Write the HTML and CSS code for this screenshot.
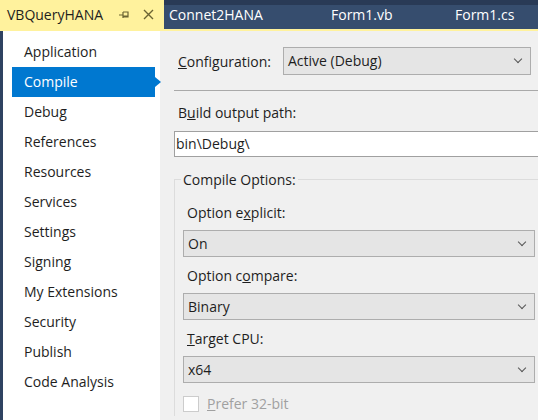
FILE: index.html
```html
<!DOCTYPE html>
<html>
<head>
  <title>VBQueryHANA</title>
  <link rel="stylesheet" href="styles.css">
</head>
<body>
  <div id="window">
    <div id="tabs">
      <div class="tab active">
        <span class="tab-name">VBQueryHANA</span>
        <svg class="pin" width="12" height="12" viewBox="0 0 12 12">
          <path d="M1 6h4M5 3v6M5 3h5v5H5M5 7h5" stroke="#6b6433" stroke-width="1.2" fill="none"/>
        </svg>
        <svg class="close" width="11" height="11" viewBox="0 0 11 11">
          <path d="M1 1l9 9M10 1l-9 9" stroke="#6b6433" stroke-width="1.4"/>
        </svg>
      </div>
      <div class="tab tab-two">Connet2HANA</div>
      <div class="tab tab-three">Form1.vb</div>
      <div class="tab">Form1.cs</div>
    </div>

    <div id="page">
      <div id="nav">
        <div class="nav-item">Application</div>
        <div class="nav-item selected">Compile</div>
        <div class="nav-item">Debug</div>
        <div class="nav-item">References</div>
        <div class="nav-item">Resources</div>
        <div class="nav-item">Services</div>
        <div class="nav-item">Settings</div>
        <div class="nav-item">Signing</div>
        <div class="nav-item">My Extensions</div>
        <div class="nav-item">Security</div>
        <div class="nav-item">Publish</div>
        <div class="nav-item">Code Analysis</div>
      </div>

      <div id="content">
        <div class="config-row">
          <label><u>C</u>onfiguration:</label>
          <div class="combo config-combo">Active (Debug)<span class="chevron"></span></div>
        </div>
        <div class="separator"></div>

        <div class="label build-label">B<u>u</u>ild output path:</div>
        <div class="textbox">bin\Debug\</div>

        <div class="group">
          <div class="group-title">Compile Options:</div>
          <div class="label first">Option e<u>x</u>plicit:</div>
          <div class="combo">On<span class="chevron"></span></div>
          <div class="label">Option c<u>o</u>mpare:</div>
          <div class="combo">Binary<span class="chevron"></span></div>
          <div class="label"><u>T</u>arget CPU:</div>
          <div class="combo">x64<span class="chevron"></span></div>
          <div class="check-row">
            <span class="checkbox"></span>
            <span class="check-label"><u>P</u>refer 32-bit</span>
          </div>
        </div>
      </div>
    </div>
  </div>
</body>
</html>
```

FILE: styles.css
```css
html, body {
  margin: 0;
  padding: 0;
  width: 538px;
  height: 420px;
  overflow: hidden;
}

body {
  font-family: "Open Sans", "Noto Sans", sans-serif;
  font-size: 14px;
  color: #1e1e1e;
  background: #f0f0f0;
}

#window {
  display: flex;
  flex-direction: column;
  height: 420px;
  overflow: hidden;
}

/* tab strip */
#tabs {
  display: flex;
  height: 29px;
  background: linear-gradient(#293a56 0, #293a56 5px, #364d6e 5px);
  border-bottom: 2px solid #fff29d;
  flex-shrink: 0;
}

.tab {
  display: flex;
  align-items: center;
  padding-left: 5px;
  color: #ffffff;
  font-size: 14px;
}

.tab.active {
  width: 157px;
  padding-left: 7px;
  background: #fff29d;
  color: #1e1e1e;
}

.tab-name {
  flex: 1;
}

.pin {
  margin-right: 13px;
  margin-top: 1px;
}

.close {
  margin-right: 10px;
}

.tab-two {
  width: 157px;
}

.tab-three {
  width: 119px;
}

/* page body */
#page {
  display: flex;
  flex: 1;
  min-height: 0;
  border-left: 3px solid #2f4261;
}

#nav {
  width: 157px;
  background: #ffffff;
  padding-top: 6px;
}

.nav-item {
  height: 30px;
  line-height: 29px;
  padding-left: 12px;
  margin-left: 9px;
  width: 131px;
  position: relative;
}

.nav-item.selected {
  background: #0078d0;
  color: #ffffff;
}

.nav-item.selected::after {
  content: "";
  position: absolute;
  right: -6px;
  top: 10px;
  border-left: 6px solid #0078d0;
  border-top: 5px solid transparent;
  border-bottom: 5px solid transparent;
}

#content {
  flex: 1;
  padding-top: 16px;
  padding-left: 14px;
}

.config-row {
  display: flex;
  align-items: center;
  padding-left: 4px;
}

.config-row label {
  width: 105px;
}

.combo {
  height: 26px;
  line-height: 25px;
  background: #e5e5e5;
  border: 1px solid #adadad;
  padding-left: 4px;
  position: relative;
}

.config-combo {
  width: 242px;
}

.chevron {
  position: absolute;
  right: 9px;
  top: 8px;
  width: 5px;
  height: 5px;
  border-right: 1px solid #555;
  border-bottom: 1px solid #555;
  transform: rotate(45deg);
}

.separator {
  height: 1px;
  background: #a9a9a9;
  margin: 15px 0 0 0;
}

.label {
  padding-left: 4px;
  height: 22px;
  line-height: 22px;
}

.build-label {
  margin-top: 11px;
}

.textbox {
  margin-top: 7px;
  height: 24px;
  line-height: 24px;
  background: #ffffff;
  border: 1px solid #a0a0a0;
  border-right: none;
  padding-left: 1px;
}

.group {
  margin-top: 22px;
  border: 1px solid #dcdcdc;
  border-right: none;
  border-bottom: none;
  padding: 0 0 0 8px;
  height: 236px;
  position: relative;
}

.group-title {
  position: absolute;
  top: -10px;
  left: 6px;
  padding: 0 2px;
  background: #f0f0f0;
  line-height: 20px;
}

.group .label {
  margin-top: 8px;
}

.group .label.first {
  margin-top: 22px;
}

.group .combo {
  width: 346px;
  margin-top: 6px;
  height: 25px;
  line-height: 25px;
}

.check-row {
  display: flex;
  align-items: center;
  margin-top: 11px;
}

.checkbox {
  width: 14px;
  height: 14px;
  background: #ffffff;
  border: 1px solid #cccccc;
}

.check-label {
  margin-left: 8px;
  color: #a0a0a0;
}
```
